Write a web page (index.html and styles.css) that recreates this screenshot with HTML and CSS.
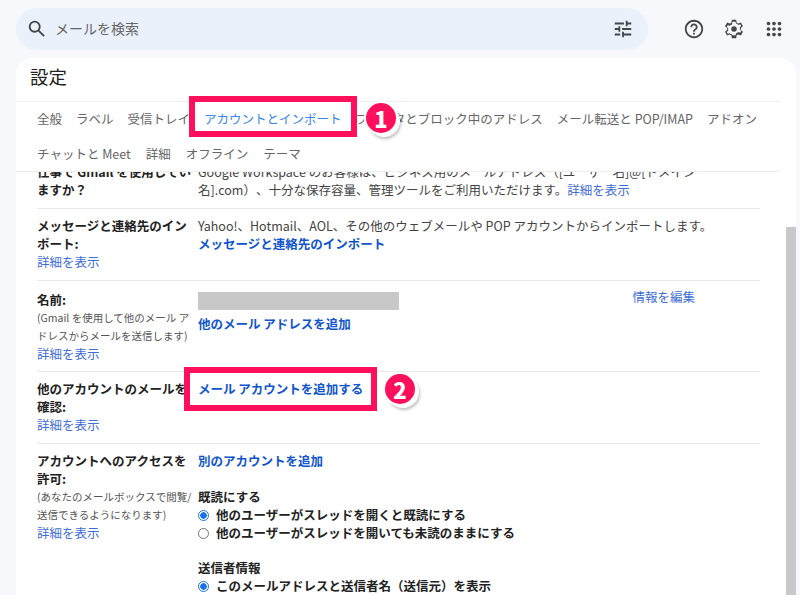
FILE: index.html
```html
<!DOCTYPE html>
<html lang="ja">
    <head>
        <meta charset="UTF-8">
        <title>設定</title>
        <link rel="stylesheet" href="styles.css">
    </head>
    <body>
        <div class="topbar">
            <div class="search">
                <svg class="icon" viewBox="0 0 24 24"><path d="M20.49 19l-5.73-5.73C15.53 12.2 16 10.91 16 9.5A6.5 6.5 0 1 0 9.5 16c1.41 0 2.7-.47 3.77-1.24L19 20.49 20.49 19zM5 9.5C5 7.01 7.01 5 9.5 5S14 7.01 14 9.5 11.99 14 9.5 14 5 11.99 5 9.5z"/></svg>
                <span class="search-text">メールを検索</span>
                <svg class="icon" viewBox="0 0 24 24"><path d="M3 17v2h6v-2H3zM3 5v2h10V5H3zm10 16v-2h8v-2h-8v-2h-2v6h2zM7 9v2H3v2h4v2h2V9H7zm14 4v-2H11v2h10zm-6-4h2V7h4V5h-4V3h-2v6z"/></svg>
            </div>
            <div class="top-icons">
                <svg class="icon" viewBox="0 0 24 24"><path d="M11 18h2v-2h-2v2zm1-16C6.48 2 2 6.48 2 12s4.48 10 10 10 10-4.48 10-10S17.52 2 12 2zm0 18c-4.41 0-8-3.59-8-8s3.59-8 8-8 8 3.59 8 8-3.59 8-8 8zm0-14c-2.21 0-4 1.79-4 4h2c0-1.1.9-2 2-2s2 .9 2 2c0 2-3 1.75-3 5h2c0-2.25 3-2.5 3-5 0-2.21-1.79-4-4-4z"/></svg>
                <svg class="icon" viewBox="0 0 24 24"><path fill-rule="evenodd" d="M19.43 12.98c.04-.32.07-.64.07-.98s-.03-.66-.07-.98l2.11-1.65c.19-.15.24-.42.12-.64l-2-3.46c-.12-.22-.39-.3-.61-.22l-2.49 1c-.52-.4-1.08-.73-1.69-.98l-.38-2.65C14.46 2.18 14.25 2 14 2h-4c-.25 0-.46.18-.49.42l-.38 2.65c-.61.25-1.17.59-1.69.98l-2.49-1c-.23-.09-.49 0-.61.22l-2 3.46c-.13.22-.07.49.12.64l2.11 1.65c-.04.32-.07.65-.07.98s.03.66.07.98l-2.11 1.65c-.19.15-.24.42-.12.64l2 3.46c.12.22.39.3.61.22l2.49-1c.52.4 1.08.73 1.69.98l.38 2.65c.03.24.24.42.49.42h4c.25 0 .46-.18.49-.42l.38-2.65c.61-.25 1.17-.59 1.69-.98l2.49 1c.23.09.49 0 .61-.22l2-3.46c.12-.22.07-.49-.12-.64l-2.11-1.65zM10.2 20l-.3-2.1c-1-.2-1.9-.8-2.7-1.4l-2 .8-1.2-2 1.7-1.3c-.2-1-.2-1.9 0-2.9L4 9.7l1.2-2 2 .8c.8-.6 1.7-1.2 2.7-1.4L10.2 4h3.6l.3 2.1c1 .2 1.9.8 2.7 1.4l2-.8 1.2 2-1.7 1.3c.2 1 .2 1.9 0 2.9l1.7 1.3-1.2 2-2-.8c-.8.6-1.7 1.2-2.7 1.4l-.3 2.1h-3.6z"/><circle cx="12" cy="12" r="3"/></svg>
                <svg class="icon" viewBox="0 0 24 24"><path d="M6 8c1.1 0 2-.9 2-2s-.9-2-2-2-2 .9-2 2 .9 2 2 2zm6 12c1.1 0 2-.9 2-2s-.9-2-2-2-2 .9-2 2 .9 2 2 2zm-6 0c1.1 0 2-.9 2-2s-.9-2-2-2-2 .9-2 2 .9 2 2 2zm0-6c1.1 0 2-.9 2-2s-.9-2-2-2-2 .9-2 2 .9 2 2 2zm6 0c1.1 0 2-.9 2-2s-.9-2-2-2-2 .9-2 2 .9 2 2 2zm4-8c0 1.1.9 2 2 2s2-.9 2-2-.9-2-2-2-2 .9-2 2zm-4 2c1.1 0 2-.9 2-2s-.9-2-2-2-2 .9-2 2 .9 2 2 2zm6 6c1.1 0 2-.9 2-2s-.9-2-2-2-2 .9-2 2 .9 2 2 2zm0 6c1.1 0 2-.9 2-2s-.9-2-2-2-2 .9-2 2 .9 2 2 2z"/></svg>
            </div>
        </div>

        <div class="card">
            <h1 class="title">設定</h1>
            <div class="tabs">
                <div class="tab-row">
                    <a>全般</a>
                    <a>ラベル</a>
                    <a>受信トレイ</a>
                    <a class="active">アカウントとインポート</a>
                    <a>フィルタとブロック中のアドレス</a>
                    <a>メール転送と POP/IMAP</a>
                    <a>アドオン</a>
                </div>
                <div class="tab-row">
                    <a>チャットと Meet</a>
                    <a>詳細</a>
                    <a>オフライン</a>
                    <a>テーマ</a>
                </div>
            </div>

            <div class="content">
                <div class="list">
                    <div class="row first">
                        <div class="label"><b>仕事で Gmail を使用していますか？</b></div>
                        <div class="value wide">Google Workspace のお客様は、ビジネス用のメールアドレス（[ユーザー名]@[ドメイン名].com）、十分な保存容量、管理ツールをご利用いただけます。<a class="more">詳細を表示</a></div>
                    </div>
                    <div class="row import">
                        <div class="label"><b>メッセージと連絡先のインポート:</b><a class="more">詳細を表示</a></div>
                        <div class="value">Yahoo!、Hotmail、AOL、その他のウェブメールや POP アカウントからインポートします。<a class="action">メッセージと連絡先のインポート</a></div>
                    </div>
                    <div class="row name">
                        <div class="label"><b>名前:</b><span class="note">(Gmail を使用して他のメール アドレスからメールを送信します)</span><a class="more">詳細を表示</a></div>
                        <div class="value">
                            <div class="name-line"><span class="blur"></span><a class="more edit">情報を編集</a></div>
                            <a class="action">他のメール アドレスを追加</a>
                        </div>
                    </div>
                    <div class="row check">
                        <div class="label"><b>他のアカウントのメールを確認:</b><a class="more">詳細を表示</a></div>
                        <div class="value"><a class="action">メール アカウントを追加する</a></div>
                    </div>
                    <div class="row access">
                        <div class="label"><b>アカウントへのアクセスを許可:</b><span class="note">(あなたのメールボックスで閲覧/送信できるようになります)</span><a class="more">詳細を表示</a></div>
                        <div class="value">
                            <a class="action">別のアカウントを追加</a>
                            <b class="group">既読にする</b>
                            <label class="radio"><span class="dot on"></span>他のユーザーがスレッドを開くと既読にする</label>
                            <label class="radio"><span class="dot"></span>他のユーザーがスレッドを開いても未読のままにする</label>
                            <b class="group second">送信者情報</b>
                            <label class="radio"><span class="dot on"></span>このメールアドレスと送信者名（送信元）を表示</label>
                        </div>
                    </div>
                </div>
                <div class="scrollbar"></div>
            </div>
        </div>

        <div class="mark mark-one"></div>
        <div class="badge badge-one">1</div>
        <div class="mark mark-two"></div>
        <div class="badge badge-two">2</div>
    </body>
</html>
```

FILE: styles.css
```css
html, body {
    margin: 0;
    height: 100%;
    overflow: hidden;
}
body {
    background-color: #f6f8fc;
    font-family: "Noto Sans CJK JP", "Noto Sans", sans-serif;
    font-size: 12.5px;
    color: #222;
    padding: 8px 0 0 16px;
    box-sizing: border-box;
    text-spacing-trim: space-all;
}
a {
    text-decoration: none;
}
.topbar {
    display: flex;
    align-items: center;
    height: 42px;
}
.search {
    display: flex;
    align-items: center;
    width: 632px;
    height: 42px;
    box-sizing: border-box;
    padding: 0 14px 0 10px;
    background-color: #eaf1fb;
    border-radius: 21px;
}
.icon {
    width: 22px;
    height: 22px;
    fill: #444746;
    flex-shrink: 0;
}
.search-text {
    flex: 1;
    margin-left: 7px;
    padding-bottom: 2px;
    font-size: 14px;
    color: #666;
}
.top-icons {
    display: flex;
    gap: 18px;
    margin-left: 35px;
}
.card {
    width: 780px;
    height: 537px;
    margin-top: 8px;
    background-color: #fff;
    border-radius: 16px 16px 0 0;
    overflow: hidden;
}
.title {
    margin: 0;
    padding: 5px 0 0 14px;
    height: 43px;
    box-sizing: border-box;
    font-size: 18.5px;
    font-weight: 400;
    line-height: 26px;
    color: #222;
}
.tabs {
    width: 764px;
    height: 71px;
    box-sizing: border-box;
    border-top: 1px solid #eee;
    border-bottom: 1px solid #eee;
    padding-left: 21px;
}
.tab-row {
    display: flex;
    gap: 14px;
    height: 33px;
    align-items: center;
    color: #666;
    white-space: nowrap;
}
.tab-row + .tab-row {
    gap: 15px;
    margin-top: 2px;
}
.tab-row .active {
    color: #3a85ee;
}
.content {
    position: relative;
    height: 423px;
    overflow: hidden;
}
.list {
    width: 723px;
    margin-left: 21px;
}
.row {
    display: flex;
    border-bottom: 1px solid #e8e8e8;
    line-height: 18px;
    box-sizing: border-box;
}
.row.first {
    height: 37px;
    align-items: flex-end;
    padding-bottom: 9px;
}
.row.import { height: 72px; padding-top: 8px; }
.row.name { height: 91px; padding-top: 10px; }
.row.check { height: 72px; padding-top: 8px; }
.row.access { height: 170px; padding-top: 8px; }
.label {
    width: 158px;
    margin-right: 3px;
    flex-shrink: 0;
}
.label b, .label a, .label .note {
    display: block;
}
.note {
    font-size: 10.5px;
    color: #555;
}
.more {
    color: #3f6ed8;
}
.value {
    flex: 1;
    color: #444;
}
.wide {
    max-width: 505px;
}
.action {
    display: block;
    color: #1155cc;
    font-weight: 700;
}
.name-line {
    display: flex;
    justify-content: space-between;
    height: 24px;
}
.blur {
    width: 201px;
    height: 18px;
    margin-top: 1px;
    background-color: #c8c8c8;
}
.edit {
    margin: -3px 65px 0 0;
}
.group {
    display: block;
    margin-top: 18px;
    color: #222;
}
.group.second {
    margin-top: 17px;
}
.radio {
    display: flex;
    align-items: center;
    font-weight: 700;
    color: #222;
}
.dot {
    width: 9px;
    height: 9px;
    border: 1px solid #777;
    border-radius: 50%;
    margin-right: 7px;
}
.dot.on {
    border-color: #1a73e8;
    background: radial-gradient(circle, #1a73e8 0 3px, #fff 3.5px);
}
.scrollbar {
    position: absolute;
    left: 770px;
    top: 55px;
    width: 10px;
    height: 368px;
    background-color: #c8c8c8;
}
.mark {
    position: absolute;
    box-sizing: border-box;
    border: 6px solid #ff0f5c;
}
.mark-one {
    left: 189px;
    top: 96px;
    width: 168px;
    height: 41px;
}
.mark-two {
    left: 184px;
    top: 367px;
    width: 193px;
    height: 44px;
}
.badge {
    position: absolute;
    width: 30px;
    height: 30px;
    border-radius: 50%;
    background-color: #ff0f5c;
    color: #fff;
    font-weight: 900;
    font-size: 22px;
    line-height: 30px;
    text-align: center;
    box-shadow: 0 0 0 2px #fff, 3px 3px 0 1px #fff, 4px 5px 3px 1px rgba(0, 0, 0, 0.25);
}
.badge-one {
    left: 366px;
    top: 103px;
}
.badge-two {
    left: 385px;
    top: 374px;
}
```
